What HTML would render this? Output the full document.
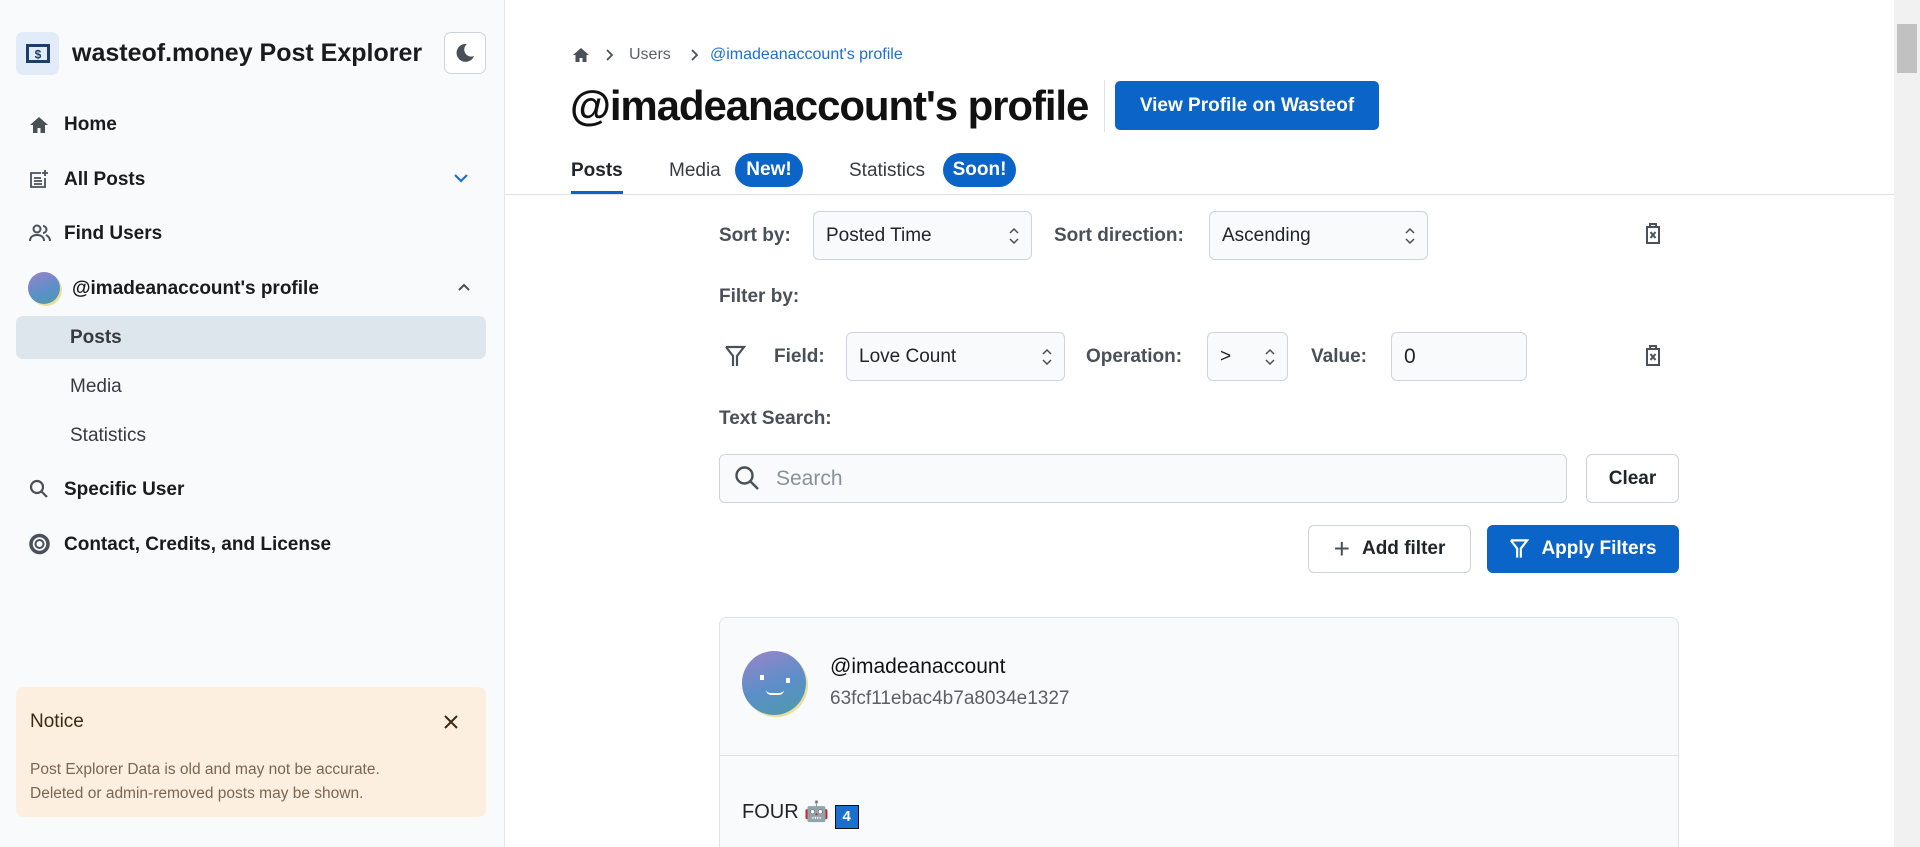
<!DOCTYPE html>
<html style="overflow:hidden;height:847px"><head><meta charset="utf-8"><style>
*{box-sizing:border-box;margin:0;padding:0}
body{width:1920px;height:847px;overflow:hidden;background:#fff;font-family:"Liberation Sans",sans-serif;color:#1a1b1e;position:relative}
.a{position:absolute}
.side{left:0;top:0;width:505px;height:847px;background:#f8fafc;border-right:1px solid #e3e6ea}
.nav{position:absolute;left:64px;font-size:19px;font-weight:bold;color:#1a1b1e;transform:translateY(-50%)}
.sub{position:absolute;left:70px;font-size:19px;color:#373a40;transform:translateY(-50%)}
.ico{position:absolute;left:29px;transform:translateY(-50%)}
.lbl{position:absolute;font-size:19px;font-weight:bold;color:#495057;transform:translateY(-50%)}
.sel{position:absolute;border:1px solid #ced4da;border-radius:6px;background:#f8fafc;font-size:19px;color:#212529;padding-left:12px;display:flex;align-items:center}
.chev{position:absolute;right:12px;top:50%;transform:translateY(-50%)}
.btn{position:absolute;border:1px solid #ced4da;border-radius:6px;background:#fff;font-size:19px;font-weight:bold;display:flex;align-items:center;justify-content:center;gap:12px}
.badge{position:absolute;background:#0b64c8;color:#fff;font-weight:bold;font-size:19px;border-radius:17px;display:flex;align-items:center;justify-content:center}
</style></head><body>
<div class="a side"></div>
<div class="a" style="left:16px;top:32px;width:43px;height:43px;background:#e1ecf8;border-radius:7px"></div>
<svg class="a" style="left:26px;top:44px" width="24" height="19" viewBox="0 0 24 19"><rect x="1.5" y="1.5" width="21" height="16" fill="none" stroke="#1d3f66" stroke-width="3"/><text x="12" y="14.5" font-size="12" font-weight="bold" text-anchor="middle" fill="#1d3f66" font-family="Liberation Sans">$</text></svg>
<div class="a" style="left:72px;top:39px;font-size:25px;font-weight:bold">wasteof.money Post Explorer</div>
<div class="a" style="left:444px;top:32px;width:42px;height:42px;border:1px solid #ced4da;border-radius:7px;background:#fff"></div>
<svg class="a" style="left:455px;top:43px" width="20" height="20" viewBox="0 0 20 20"><path d="M12 1A9 9 0 1 0 19 13A7 7 0 0 1 12 1Z" fill="#495057"/></svg>

<svg class="ico" style="top:125px" width="20" height="18" viewBox="0 0 20 18"><path d="M10 1L1 9h3v8h4.5v-5h3v5H16V9h3z" fill="#495057"/></svg>
<div class="nav" style="top:125px">Home</div>
<svg class="ico" style="top:179px" width="20" height="20" viewBox="0 0 20 20" fill="none" stroke="#495057" stroke-width="1.8"><path d="M12 4H2v14h14V9M5 9h7M5 12h8M5 15h8M16 1v6M13 4h6"/></svg>
<div class="nav" style="top:180px">All Posts</div>
<svg class="a" style="left:453px;top:173px" width="16" height="10" viewBox="0 0 16 10"><path d="M2 2l6 6 6-6" fill="none" stroke="#1c6fd1" stroke-width="2.2"/></svg>
<svg class="ico" style="top:233px" width="22" height="18" viewBox="0 0 22 18" fill="none" stroke="#495057" stroke-width="2"><circle cx="8" cy="5" r="3.5"/><path d="M1 17c0-4 3-6 7-6s7 2 7 6M14 2a3.5 3.5 0 0 1 0 7M17 11c2 1 4 3 4 6"/></svg>
<div class="nav" style="top:234px">Find Users</div>
<div class="a" style="left:28px;top:272px;width:32px;height:32px;border-radius:50%;background:linear-gradient(160deg,#9a84c8,#5a8fc8 60%,#4f9aa8);box-shadow:2px 2px 0 #eadf9a"></div>
<div class="a" style="left:72px;top:278px;font-size:19px;font-weight:bold">@imadeanaccount's profile</div>
<svg class="a" style="left:457px;top:283px" width="14" height="9" viewBox="0 0 14 9"><path d="M2 7l5-5 5 5" fill="none" stroke="#495057" stroke-width="2"/></svg>
<div class="a" style="left:16px;top:316px;width:470px;height:43px;background:#dde6ec;border-radius:7px"></div>
<div class="sub" style="top:338px;font-weight:bold;color:#373a40">Posts</div>
<div class="sub" style="top:387px">Media</div>
<div class="sub" style="top:436px">Statistics</div>
<svg class="ico" style="top:489px" width="20" height="20" viewBox="0 0 20 20" fill="none" stroke="#495057" stroke-width="2.2"><circle cx="8" cy="8" r="6"/><path d="M12.5 12.5L18 18"/></svg>
<div class="nav" style="top:490px">Specific User</div>
<svg class="ico" style="top:544px" width="21" height="21" viewBox="0 0 21 21"><circle cx="10.5" cy="10.5" r="8.5" fill="none" stroke="#495057" stroke-width="3.5"/><circle cx="10.5" cy="10.5" r="4" fill="none" stroke="#495057" stroke-width="2"/></svg>
<div class="nav" style="top:545px">Contact, Credits, and License</div>

<div class="a" style="left:16px;top:687px;width:470px;height:130px;background:#fdefdf;border-radius:8px"></div>
<div class="a" style="left:30px;top:711px;font-size:19px;color:#3a2a10">Notice</div>
<svg class="a" style="left:443px;top:714px" width="16" height="16" viewBox="0 0 16 16"><path d="M2 2l12 12M14 2L2 14" stroke="#3a2a10" stroke-width="2"/></svg>
<div class="a" style="left:30px;top:758px;font-size:15.5px;line-height:24px;color:#7a6650">Post Explorer Data is old and may not be accurate.<br>Deleted or admin-removed posts may be shown.</div>

<div class="a" style="left:1894px;top:0;width:26px;height:847px;background:#f1f1f1"></div>
<div class="a" style="left:1897px;top:24px;width:20px;height:49px;background:#c1c1c1"></div>

<svg class="a" style="left:572px;top:47px" width="18" height="16" viewBox="0 0 18 16"><path d="M9 1L1 8h2.5v7h4v-4h3v4h4V8H17z" fill="#495057"/></svg>
<svg class="a" style="left:605px;top:49px" width="8" height="12" viewBox="0 0 8 12"><path d="M2 1l5 5-5 5" fill="none" stroke="#495057" stroke-width="1.8"/></svg>
<div class="a" style="left:629px;top:46px;font-size:16px;color:#5c5f66">Users</div>
<svg class="a" style="left:690px;top:49px" width="8" height="12" viewBox="0 0 8 12"><path d="M2 1l5 5-5 5" fill="none" stroke="#495057" stroke-width="1.8"/></svg>
<div class="a" style="left:710px;top:46px;font-size:16px;color:#1c6fd1">@imadeanaccount's profile</div>
<div class="a" style="left:570px;top:82px;font-size:42px;font-weight:bold;letter-spacing:-1.1px;color:#111">@imadeanaccount's profile</div>
<div class="a" style="left:1104px;top:80px;width:1px;height:52px;background:#dee2e6"></div>
<div class="a" style="left:1115px;top:81px;width:264px;height:49px;background:#0b64c8;border-radius:5px;color:#fff;font-size:19px;font-weight:bold;display:flex;align-items:center;justify-content:center">View Profile on Wasteof</div>

<div class="a" style="left:571px;top:160px;font-size:19px;font-weight:bold;color:#212529">Posts</div>
<div class="a" style="left:571px;top:191px;width:52px;height:3px;background:#0b64c8"></div>
<div class="a" style="left:669px;top:160px;font-size:19px;color:#373a40">Media</div>
<div class="badge" style="left:735px;top:153px;width:68px;height:34px">New!</div>
<div class="a" style="left:849px;top:160px;font-size:19px;color:#373a40">Statistics</div>
<div class="badge" style="left:943px;top:153px;width:73px;height:34px">Soon!</div>
<div class="a" style="left:505px;top:194px;width:1389px;height:1px;background:#dee2e6"></div>

<svg width="0" height="0" style="position:absolute"><defs><g id="ch"><path d="M1 5l4-4 4 4M1 11l4 4 4-4" fill="none" stroke="#495057" stroke-width="1.5"/></g><g id="tr"><path d="M3 5h14M7 5V2h6v3M4 5v16h12V5M7.5 10l5 6M12.5 10l-5 6" fill="none" stroke="#495057" stroke-width="2"/></g></defs></svg>

<div class="lbl" style="left:719px;top:236px">Sort by:</div>
<div class="sel" style="left:813px;top:211px;width:219px;height:49px">Posted Time<svg class="chev" width="10" height="16"><use href="#ch"/></svg></div>
<div class="lbl" style="left:1054px;top:236px">Sort direction:</div>
<div class="sel" style="left:1209px;top:211px;width:219px;height:49px">Ascending<svg class="chev" width="10" height="16"><use href="#ch"/></svg></div>
<svg class="a" style="left:1643px;top:222px" width="20" height="24"><use href="#tr"/></svg>

<div class="lbl" style="left:719px;top:297px">Filter by:</div>
<svg class="a" style="left:724px;top:345px" width="22" height="23" viewBox="0 0 22 23"><path d="M2 2h18l-7 9v10M9 21V11L2 2" fill="none" stroke="#495057" stroke-width="2.2"/></svg>
<div class="lbl" style="left:774px;top:357px">Field:</div>
<div class="sel" style="left:846px;top:332px;width:219px;height:49px">Love Count<svg class="chev" width="10" height="16"><use href="#ch"/></svg></div>
<div class="lbl" style="left:1086px;top:357px">Operation:</div>
<div class="sel" style="left:1207px;top:332px;width:81px;height:49px">&gt;<svg class="chev" width="10" height="16"><use href="#ch"/></svg></div>
<div class="lbl" style="left:1311px;top:357px">Value:</div>
<div class="sel" style="left:1391px;top:332px;width:136px;height:49px;font-size:21px">0</div>
<svg class="a" style="left:1643px;top:344px" width="20" height="24"><use href="#tr"/></svg>

<div class="lbl" style="left:719px;top:419px">Text Search:</div>
<div class="sel" style="left:719px;top:454px;width:848px;height:49px;padding-left:56px;color:#8a9099;font-size:21px">Search</div>
<svg class="a" style="left:734px;top:465px" width="26" height="26" viewBox="0 0 26 26" fill="none" stroke="#495057" stroke-width="2.4"><circle cx="10.5" cy="10.5" r="8"/><path d="M16.5 16.5L24 24"/></svg>
<div class="btn" style="left:1586px;top:454px;width:93px;height:49px;color:#212529">Clear</div>
<div class="btn" style="left:1308px;top:525px;width:163px;height:48px;color:#212529"><span style="font-size:28px;font-weight:normal;color:#495057;line-height:20px">+</span>Add filter</div>
<div class="btn" style="left:1487px;top:525px;width:192px;height:48px;background:#0b64c8;border-color:#0b64c8;color:#fff"><svg width="20" height="22" viewBox="0 0 22 23"><path d="M2 2h18l-7 9v10M9 21V11L2 2" fill="none" stroke="#fff" stroke-width="2.4"/></svg>Apply Filters</div>

<div class="a" style="left:719px;top:617px;width:960px;height:230px;border:1px solid #dee2e6;border-bottom:none;border-radius:8px 8px 0 0;background:#f8fafc"></div>
<div class="a" style="left:720px;top:755px;width:958px;height:1px;background:#dee2e6"></div>
<div class="a" style="left:742px;top:651px;width:64px;height:64px;border-radius:50%;background:linear-gradient(160deg,#9a84c8,#5a8fc8 55%,#4f9aa8);box-shadow:2px 2px 0 #eadf9a"></div>
<div class="a" style="left:760px;top:675px;width:4px;height:5px;background:#fff"></div>
<div class="a" style="left:786px;top:678px;width:4px;height:5px;background:#fff"></div>
<div class="a" style="left:766px;top:690px;width:18px;height:5px;border-bottom:2px solid #fff;border-radius:0 0 10px 10px"></div>
<div class="a" style="left:830px;top:655px;font-size:21px;color:#111">@imadeanaccount</div>
<div class="a" style="left:830px;top:688px;font-size:19px;color:#5c5f66">63fcf11ebac4b7a8034e1327</div>
<div class="a" style="left:742px;top:799px;font-size:20px;color:#212529">FOUR <span style="font-size:20px">🤖</span> <span style="display:inline-block;width:24px;height:24px;background:#1a6fd0;border:1px solid #111;color:#fff;font-size:15px;font-weight:bold;text-align:center;line-height:22px;vertical-align:-3px">4</span></div>
</body></html>
